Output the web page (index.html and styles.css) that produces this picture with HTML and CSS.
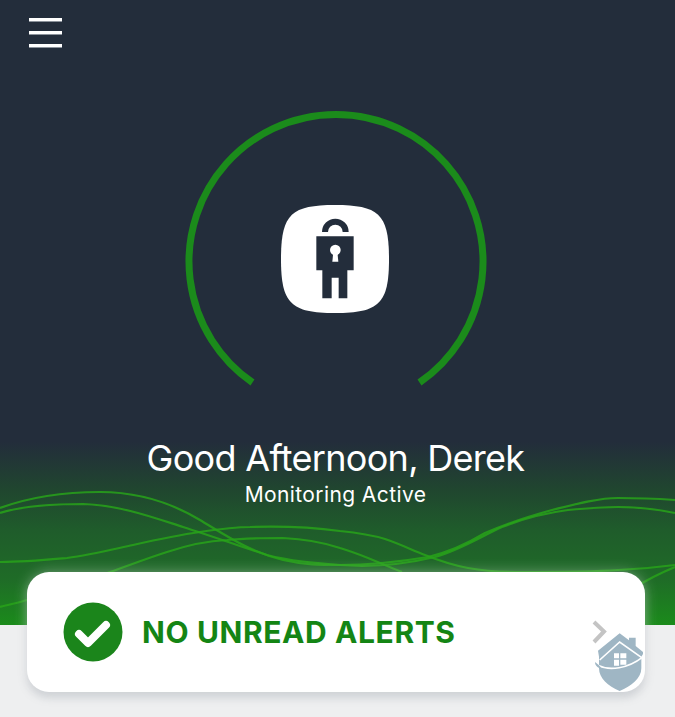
FILE: index.html
```html
<!DOCTYPE html>
<html lang="en">
<head>
  <meta charset="UTF-8" />
  <meta name="viewport" content="width=device-width, initial-scale=1.0"/>
  <title>Monitoring</title>
  <link rel="stylesheet" href="styles.css">
</head>
<body>

  <section class="hero">
    <!-- wave lines behind the greeting -->
    <svg class="waves" viewBox="0 0 675 625" aria-hidden="true">
      <path d="M0 508C30 497 60 492 100 492C140 492 175 505 200 520C225 535 250 552 283 560C305 565 320 565 340 565C380 565 410 560 428 557C450 552 470 542 485 533C510 522 530 516 552 510C580 503 600 498 618 498C640 498 660 499 675 500"/>
      <path d="M0 513C25 505 55 504 83 504C120 505 155 518 183 527C205 534 240 546 267 555C290 561 315 563 340 565C380 568 410 563 435 557C460 550 480 537 502 527C525 518 545 513 568 510C590 508 605 507 618 507C640 507 660 510 675 513"/>
      <path d="M0 562C25 562 45 560 67 558C90 555 110 550 133 545C155 540 178 535 200 532C220 529 235 527 250 527C280 526 310 527 340 531C360 533 372 535 385 539C400 544 412 550 425 555C440 561 452 565 468 568C485 571 500 572 518 572C550 572 590 572 618 570C640 569 660 567 675 565"/>
      <path d="M0 607C10 604 18 603 27 600C55 590 85 581 110 572C130 565 148 558 167 552C185 546 205 541 227 540C245 538 265 538 283 538C305 539 322 542 340 548C350 551 358 554 368 558C380 563 392 568 402 572"/>
      <path d="M630 590C645 581 660 573 675 567"/>
    </svg>

    <button class="menu" aria-label="Menu">
      <span></span>
      <span></span>
      <span></span>
    </button>

    <div class="status-ring">
      <svg class="ring" viewBox="0 0 310 290" aria-hidden="true">
        <path d="M71.500 272.500A147 147 0 1 1 238.500 272.500"/>
      </svg>
      <svg class="logo" viewBox="63 40 324 324" aria-hidden="true">
        <path class="logo-bg" d="M225 40C358 40 387 69 387 202C387 335 358 364 225 364C92 364 63 335 63 202C63 69 92 40 225 40Z"/>
        <path class="logo-shackle" d="M195 121A31 31 0 0 1 257 121"/>
        <path class="logo-lock" d="M169 134H281V236H262V320H236V258H215V320H187V236H169Z"/>
        <circle class="logo-key" cx="226" cy="175" r="16"/>
        <path class="logo-key" d="M220 180H232L235 210H217Z"/>
      </svg>
    </div>

    <h1 class="greeting">Good Afternoon, Derek</h1>
    <p class="status">Monitoring Active</p>
  </section>

  <section class="alerts">
    <div class="alerts-card">
      <svg class="check" viewBox="0 0 60 60" aria-hidden="true">
        <circle cx="30" cy="30" r="29.500"/>
        <path d="M16 32L25 41L43 23"/>
      </svg>
      <span class="alerts-text">NO UNREAD ALERTS</span>
      <svg class="chevron" viewBox="0 0 16 24" aria-hidden="true">
        <path d="M3 2L13 11.500L3 22"/>
      </svg>
      <!-- house shield watermark -->
      <svg class="badge" viewBox="70 96 156 180" aria-hidden="true">
        <path class="badge-fill" d="M150 100L178 121V113H198V138L220 156V162L215 170V205C215 235 185 258 150 273C115 258 88 235 88 205V170L85 152Z"/>
        <path class="badge-line" d="M90 180L150 126L215 172"/>
        <path class="badge-swoosh" d="M84 196C120 214 175 205 218 172"/>
        <path class="badge-tip" d="M76 186C76 198 86 204 98 208L88 196Z"/>
        <path class="badge-window" d="M133 160H148V175H133ZM152 160H170V175H152ZM133 179H148V197H133ZM152 179H170V194H152Z"/>
      </svg>
    </div>
  </section>

</body>
</html>
```

FILE: styles.css
```css
html, body {
  margin: 0;
  padding: 0;
}
body {
  font-family: Inter, "Liberation Sans", sans-serif;
  background-color: #eeeff0;
  overflow: hidden;
}
.hero {
  position: relative;
  height: 625px;
  box-sizing: border-box;
  padding: 18px 4px 0 0;
  text-align: center;
  background: linear-gradient(180deg, #232d3b 0, #232d3b 442px, #20462f 490px, #1f5c2b 530px, #1f6c27 580px, #1b8b1b 625px);
}
.waves {
  position: absolute;
  left: 0;
  top: 0;
  width: 675px;
  height: 625px;
}
.waves path {
  fill: none;
  stroke: #28a21a;
  stroke-width: 2.200;
  opacity: 0.85;
}
.menu {
  position: relative;
  display: flex;
  flex-direction: column;
  gap: 10px;
  width: 33px;
  margin: 0 0 0 29px;
  padding: 0;
  background: none;
  border: none;
}
.menu span {
  display: block;
  width: 33px;
  height: 3px;
  background: #fff;
  box-shadow: 0 1px 0 #8b929b;
}
.status-ring {
  position: relative;
  display: flex;
  align-items: flex-start;
  justify-content: center;
  width: 310px;
  height: 290px;
  margin: 63px 0 0 181px;
}
.ring {
  width: 310px;
  height: 290px;
}
.ring path {
  fill: none;
  stroke: #1b8b1b;
  stroke-width: 7;
}
.logo {
  position: absolute;
  left: 100px;
  top: 95px;
  width: 108px;
  height: 108px;
}
.logo-bg,
.logo-key {
  fill: #fff;
}
.logo-lock {
  fill: #232d3b;
}
.logo-shackle {
  fill: none;
  stroke: #232d3b;
  stroke-width: 18;
}
.greeting {
  position: relative;
  margin: 36px 0 0;
  font-size: 36px;
  line-height: 44px;
  font-weight: 400;
  letter-spacing: -0.7px;
  color: #fff;
}
.status {
  position: relative;
  margin: 1px 0 0;
  font-size: 21px;
  line-height: 28px;
  letter-spacing: 0.4px;
  color: #fff;
}
.alerts {
  position: relative;
  padding: 0 30px 25px 27px;
  margin-top: -53px;
}
.alerts-card {
  position: relative;
  display: flex;
  align-items: center;
  height: 120px;
  box-sizing: border-box;
  padding: 0 38px 0 36px;
  background: #fff;
  border-radius: 22px;
  box-shadow: 0 0 14px rgba(255,255,255,0.35), 0 5px 8px rgba(120,130,140,0.35);
}
.check {
  width: 60px;
  height: 60px;
  flex-shrink: 0;
}
.check circle {
  fill: #1b851b;
}
.check path {
  fill: none;
  stroke: #fff;
  stroke-width: 8;
  stroke-linecap: round;
  stroke-linejoin: round;
}
.alerts-text {
  flex: 1;
  margin-left: 19px;
  font-size: 30px;
  font-weight: 700;
  letter-spacing: 0.6px;
  color: #148514;
}
.chevron {
  width: 16px;
  height: 24px;
}
.chevron path {
  fill: none;
  stroke: #c4c4c4;
  stroke-width: 4;
}
.badge {
  position: absolute;
  left: 566px;
  top: 60px;
  width: 52px;
  height: 60px;
}
.badge-fill,
.badge-tip {
  fill: #9fb6c4;
}
.badge-line,
.badge-swoosh {
  fill: none;
  stroke: #fff;
  stroke-width: 5;
}
.badge-window {
  fill: #fff;
}
```
